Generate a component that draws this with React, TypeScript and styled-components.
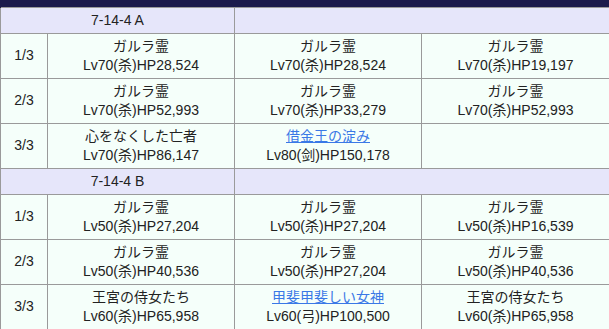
import React from 'react'
import styled, { createGlobalStyle } from 'styled-components'

const GlobalStyle = createGlobalStyle`
  body {
    margin: 0;
    background: #ffffff;
    font-family: "Liberation Sans", Arial, "Noto Sans CJK JP", sans-serif;
  }
`

const Table = styled.table`
  width: 609px;
  border-collapse: collapse;
  table-layout: fixed;
  font-size: 14px;
  color: #222;
`

const Col = styled.col<{ $w: number }>`
  width: ${(p) => p.$w}px;
`

const TopBar = styled.td`
  height: 6px;
  padding: 0;
  background: #1b1a4c;
  border: 1px solid #1b1a4c;
  border-bottom: none;
`

const Cell = styled.td<{ $head?: boolean }>`
  border: 1px solid #9a9a9a;
  background: ${(p) => (p.$head ? '#e6e6fa' : '#f5fffa')};
  text-align: center;
  vertical-align: middle;
  padding: ${(p) => (p.$head ? '3px 4px' : '2px 4px')};
  height: ${(p) => (p.$head ? '19px' : '40px')};
  line-height: ${(p) => (p.$head ? '19px' : '19.5px')};
  white-space: nowrap;
`

const Name = styled.div<{ $link?: boolean }>`
  color: ${(p) => (p.$link ? '#3a78e6' : 'inherit')};
  text-decoration: ${(p) => (p.$link ? 'underline' : 'none')};
`

type Enemy = { name: string; stat: string; link?: boolean } | null

type Wave = { label: string; enemies: Enemy[] }

type Stage = { title: string; waves: Wave[] }

const stages: Stage[] = [
  {
    title: '7-14-4 A',
    waves: [
      {
        label: '1/3',
        enemies: [
          { name: 'ガルラ霊', stat: 'Lv70(杀)HP28,524' },
          { name: 'ガルラ霊', stat: 'Lv70(杀)HP28,524' },
          { name: 'ガルラ霊', stat: 'Lv70(杀)HP19,197' },
        ],
      },
      {
        label: '2/3',
        enemies: [
          { name: 'ガルラ霊', stat: 'Lv70(杀)HP52,993' },
          { name: 'ガルラ霊', stat: 'Lv70(杀)HP33,279' },
          { name: 'ガルラ霊', stat: 'Lv70(杀)HP52,993' },
        ],
      },
      {
        label: '3/3',
        enemies: [
          { name: '心をなくした亡者', stat: 'Lv70(杀)HP86,147' },
          { name: '借金王の淀み', stat: 'Lv80(剑)HP150,178', link: true },
          null,
        ],
      },
    ],
  },
  {
    title: '7-14-4 B',
    waves: [
      {
        label: '1/3',
        enemies: [
          { name: 'ガルラ霊', stat: 'Lv50(杀)HP27,204' },
          { name: 'ガルラ霊', stat: 'Lv50(杀)HP27,204' },
          { name: 'ガルラ霊', stat: 'Lv50(杀)HP16,539' },
        ],
      },
      {
        label: '2/3',
        enemies: [
          { name: 'ガルラ霊', stat: 'Lv50(杀)HP40,536' },
          { name: 'ガルラ霊', stat: 'Lv50(杀)HP27,204' },
          { name: 'ガルラ霊', stat: 'Lv50(杀)HP40,536' },
        ],
      },
      {
        label: '3/3',
        enemies: [
          { name: '王宮の侍女たち', stat: 'Lv60(杀)HP65,958' },
          { name: '甲斐甲斐しい女神', stat: 'Lv60(弓)HP100,500', link: true },
          { name: '王宮の侍女たち', stat: 'Lv60(杀)HP65,958' },
        ],
      },
    ],
  },
]

const App: React.FC = () => {
  return (
    <>
      <GlobalStyle />
      <Table>
        <colgroup>
          <Col $w={47} />
          <Col $w={187} />
          <Col $w={187} />
          <Col $w={188} />
        </colgroup>
        <tbody>
          <tr>
            <TopBar colSpan={4} />
          </tr>
          {stages.map((stage) => (
            <React.Fragment key={stage.title}>
              <tr>
                <Cell $head colSpan={2}>{stage.title}</Cell>
                <Cell $head colSpan={2} />
              </tr>
              {stage.waves.map((wave) => (
                <tr key={stage.title + wave.label}>
                  <Cell>{wave.label}</Cell>
                  {wave.enemies.map((e, i) => (
                    <Cell key={i}>
                      {e && (
                        <>
                          <Name $link={e.link}>{e.name}</Name>
                          <div>{e.stat}</div>
                        </>
                      )}
                    </Cell>
                  ))}
                </tr>
              ))}
            </React.Fragment>
          ))}
        </tbody>
      </Table>
    </>
  )
}

export default App
